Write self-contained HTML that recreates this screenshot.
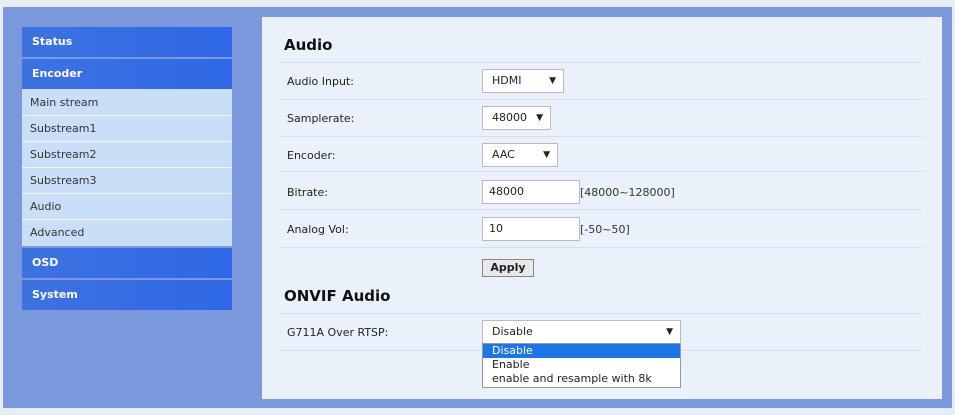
<!DOCTYPE html>
<html><head><style>
*{margin:0;padding:0;box-sizing:border-box}
body{width:955px;height:415px;background:#e6edf7;font-family:"DejaVu Sans","Liberation Sans",sans-serif;font-size:11px;color:#222;position:relative;overflow:hidden}
.outer{position:absolute;left:3px;top:7px;width:949px;height:401px;background:#7b98dc}
.content{position:absolute;left:262px;top:17px;width:680px;height:382px;background:#eaf1fb}
.nav{position:absolute;left:22px;width:210px;height:30px;background:linear-gradient(90deg,#3d72e0,#2f68e6);color:#fff;font-weight:bold;font-size:11px;padding-left:10px;line-height:30px}
.subs{position:absolute;left:22px;top:89px;width:210px;height:157px;background:#c9dff8}
.sub{height:26px;border-top:1px solid #f2f7fd;color:#333;padding-left:8px;line-height:25px;font-size:11px}
.abs{position:absolute}
h2{position:absolute;font-size:15px;font-weight:bold;color:#111}
.line{position:absolute;left:280px;width:642px;height:1px;background:#d6dfeb}
.lbl{position:absolute;left:287px}
.box{position:absolute;background:#fff;border:1px solid #bbb;height:24px;line-height:22px;padding-left:9px;font-size:11px}
.arr{position:absolute;right:7px;top:0;font-size:9px}
</style></head><body>
<div class="outer"></div>
<div class="content"></div>
<div class="nav" style="top:27px">Status</div>
<div class="nav" style="top:59px">Encoder</div>
<div class="subs">
<div class="sub" style="border-top:1px solid #c9dff8">Main stream</div>
<div class="sub">Substream1</div>
<div class="sub">Substream2</div>
<div class="sub">Substream3</div>
<div class="sub">Audio</div>
<div class="sub">Advanced</div>
</div>
<div class="nav" style="top:248px">OSD</div>
<div class="nav" style="top:280px">System</div>

<h2 style="left:284px;top:36px">Audio</h2>
<div class="line" style="top:62px"></div>
<div class="lbl" style="top:75px">Audio Input:</div>
<div class="box" style="left:482px;top:69px;width:82px">HDMI<span class="arr">▼</span></div>
<div class="line" style="top:99px"></div>
<div class="lbl" style="top:112px">Samplerate:</div>
<div class="box" style="left:482px;top:106px;width:69px">48000<span class="arr">▼</span></div>
<div class="line" style="top:136px"></div>
<div class="lbl" style="top:149px">Encoder:</div>
<div class="box" style="left:482px;top:143px;width:76px">AAC<span class="arr">▼</span></div>
<div class="line" style="top:171px"></div>
<div class="lbl" style="top:186px">Bitrate:</div>
<div class="box" style="left:482px;top:180px;width:98px;padding-left:6px">48000</div>
<div class="abs" style="left:580px;top:186px;color:#333">[48000~128000]</div>
<div class="line" style="top:209px"></div>
<div class="lbl" style="top:223px">Analog Vol:</div>
<div class="box" style="left:482px;top:217px;width:98px;padding-left:6px">10</div>
<div class="abs" style="left:580px;top:223px;color:#333">[-50~50]</div>
<div class="line" style="top:247px"></div>
<div class="abs" style="left:482px;top:259px;width:52px;height:18px;background:#e8e8e8;border:1px solid #888;font-weight:bold;font-size:11px;text-align:center;line-height:16px">Apply</div>
<h2 style="left:284px;top:287px">ONVIF Audio</h2>
<div class="line" style="top:313px"></div>
<div class="lbl" style="top:326px">G711A Over RTSP:</div>
<div class="box" style="left:482px;top:320px;width:199px;padding-left:9px">Disable<span class="arr">▼</span></div>
<div class="line" style="top:350px"></div>
<div class="abs" style="left:482px;top:343px;width:199px;height:45px;background:#fff;border:1px solid #999;line-height:14px;font-size:11px">
<div style="background:#1e76e6;color:#fff;padding-left:9px">Disable</div>
<div style="padding-left:9px">Enable</div>
<div style="padding-left:9px">enable and resample with 8k</div>
</div>
</body></html>
